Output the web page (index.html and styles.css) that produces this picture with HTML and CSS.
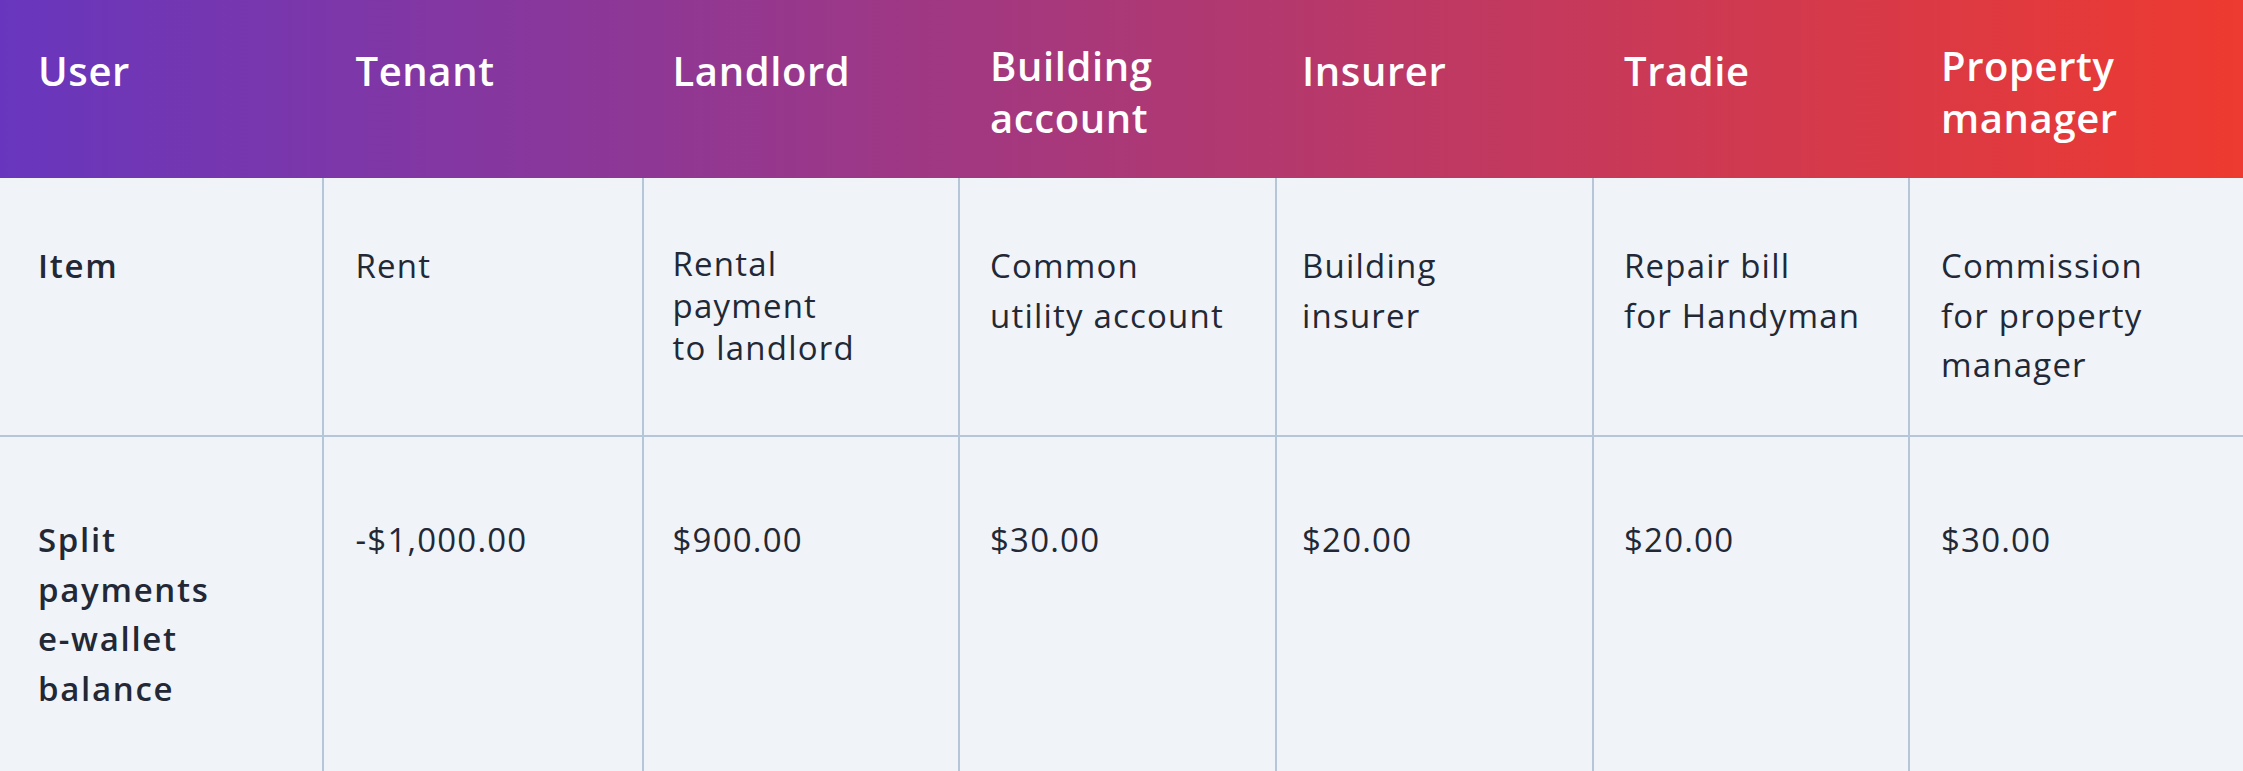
FILE: index.html
```html
<!DOCTYPE html>
<html lang="en">
<head>
<meta charset="utf-8">
<title>Split payments table</title>
<link rel="stylesheet" href="styles.css">
</head>
<body>
<div class="table">
  <div class="row head">
    <div class="cell c1">User</div>
    <div class="cell c2">Tenant</div>
    <div class="cell c3">Landlord</div>
    <div class="cell c4 two">Building<br>account</div>
    <div class="cell c5">Insurer</div>
    <div class="cell c6">Tradie</div>
    <div class="cell c7 two">Property<br>manager</div>
  </div>
  <div class="row item">
    <div class="cell c1 label">Item</div>
    <div class="cell c2">Rent</div>
    <div class="cell c3 tight">Rental<br>payment<br>to landlord</div>
    <div class="cell c4">Common<br>utility account</div>
    <div class="cell c5">Building<br>insurer</div>
    <div class="cell c6">Repair bill<br>for Handyman</div>
    <div class="cell c7">Commission<br>for property<br>manager</div>
  </div>
  <div class="row balance">
    <div class="cell c1 label">Split<br>payments<br>e-wallet<br>balance</div>
    <div class="cell c2">-$1,000.00</div>
    <div class="cell c3">$900.00</div>
    <div class="cell c4">$30.00</div>
    <div class="cell c5">$20.00</div>
    <div class="cell c6">$20.00</div>
    <div class="cell c7">$30.00</div>
  </div>
</div>
</body>
</html>
```

FILE: styles.css
```css
html, body {
  margin: 0;
  padding: 0;
  background: #f0f4f8;
}

body {
  font-family: "Open Sans", "Liberation Sans", sans-serif;
  color: #232836;
  overflow: hidden;
}

.table {
  width: 2243px;
}

.row {
  display: grid;
  grid-template-columns: 322px 319.5px 316.5px 317px 316.5px 316.5px 1fr;
}

.cell {
  white-space: nowrap;
  box-sizing: border-box;
}

.c1 { padding-left: 38px; }
.c2 { padding-left: 31.5px; }
.c3 { padding-left: 29px; }
.c4 { padding-left: 30px; }
.c5 { padding-left: 25px; }
.c6 { padding-left: 30.5px; }
.c7 { padding-left: 31px; }

/* header */
.head {
  height: 178px;
  background: linear-gradient(90deg, #6836be 0%, #ee3a30 100%);
}

.head .cell {
  color: #ffffff;
  font-size: 40px;
  font-weight: 600;
  line-height: 52px;
  letter-spacing: 0.6px;
  padding-top: 45px;
}

.head .cell.c2,
.head .cell.c3,
.head .cell.c4,
.head .cell.c5,
.head .cell.c6,
.head .cell.c7 {
  border-left: 2px solid transparent;
}

.head .cell.two {
  padding-top: 40px;
}

/* body rows */
.item .cell,
.balance .cell {
  font-size: 33px;
  line-height: 49.5px;
  letter-spacing: 1.2px;
}

.item .cell.c2,
.item .cell.c3,
.item .cell.c4,
.item .cell.c5,
.item .cell.c6,
.item .cell.c7,
.balance .cell.c2,
.balance .cell.c3,
.balance .cell.c4,
.balance .cell.c5,
.balance .cell.c6,
.balance .cell.c7 {
  border-left: 2px solid #b5c6d9;
}

.item {
  height: 259px;
  border-bottom: 2px solid #b5c6d9;
  box-sizing: border-box;
}

.item .cell {
  padding-top: 63px;
}

.item .cell.tight {
  line-height: 42px;
  padding-top: 65px;
}

.balance {
  height: 334px;
}

.balance .cell {
  padding-top: 78px;
}

.item .cell.label,
.balance .cell.label {
  font-weight: 600;
  letter-spacing: 1.7px;
}
```
